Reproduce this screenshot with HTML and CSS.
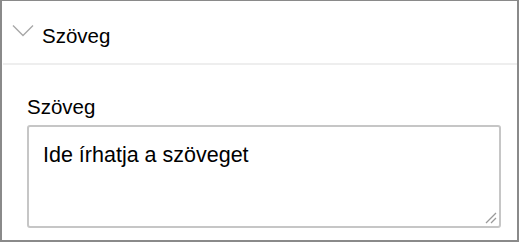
FILE: index.html
```html
<!DOCTYPE html>
<html lang="hu">
<head>
<meta charset="utf-8">
<title>Szöveg</title>
<link rel="stylesheet" href="styles.css">
</head>
<body>
<div class="panel">
  <div class="header">
    <svg class="chevron" width="24" height="14" viewBox="0 0 24 14" aria-hidden="true">
      <path d="M2 1.5 L12 11.5 L22 1.5" fill="none" stroke="#a8a8a8" stroke-width="1.4"/>
    </svg>
    <span class="title">Szöveg</span>
  </div>
  <div class="content">
    <div class="label">Szöveg</div>
    <div class="textbox">
      <span class="placeholder">Ide írhatja a szöveget</span>
      <svg class="grip" width="12" height="12" viewBox="0 0 12 12" aria-hidden="true">
        <path d="M1 11 L11 1 M6 11 L11 6" stroke="#9a9a9a" stroke-width="1.3" fill="none"/>
      </svg>
    </div>
  </div>
</div>
</body>
</html>
```
FILE: styles.css
```css
html, body {
  margin: 0;
  padding: 0;
  background: #ffffff;
}
body {
  font-family: "Liberation Sans", Arial, sans-serif;
  color: #000000;
}
.panel {
  box-sizing: border-box;
  width: 519px;
  height: 242px;
  border-style: solid;
  border-color: #8a8a8a;
  border-width: 1px 2px 2px 2px;
  background: #ffffff;
}
.header {
  box-sizing: border-box;
  height: 64px;
  display: flex;
  align-items: flex-start;
  padding: 23px 0 0 8px;
  margin-left: 1px;
  border-bottom: 2px solid #eeeeee;
}
.chevron {
  display: block;
  flex: none;
}
.title {
  margin-left: 7px;
  font-size: 20.5px;
  line-height: 23px;
}
.content {
  padding: 30px 16px 0 25px;
}
.label {
  font-size: 20.5px;
  line-height: 23px;
}
.textbox {
  position: relative;
  box-sizing: border-box;
  margin-top: 7px;
  height: 103px;
  border: 2px solid #c6c6c6;
  border-radius: 3px;
  padding: 17px 12px 0 14px;
  font-size: 21.5px;
  line-height: 23px;
}
.grip {
  position: absolute;
  right: 2px;
  bottom: 2px;
}
```
